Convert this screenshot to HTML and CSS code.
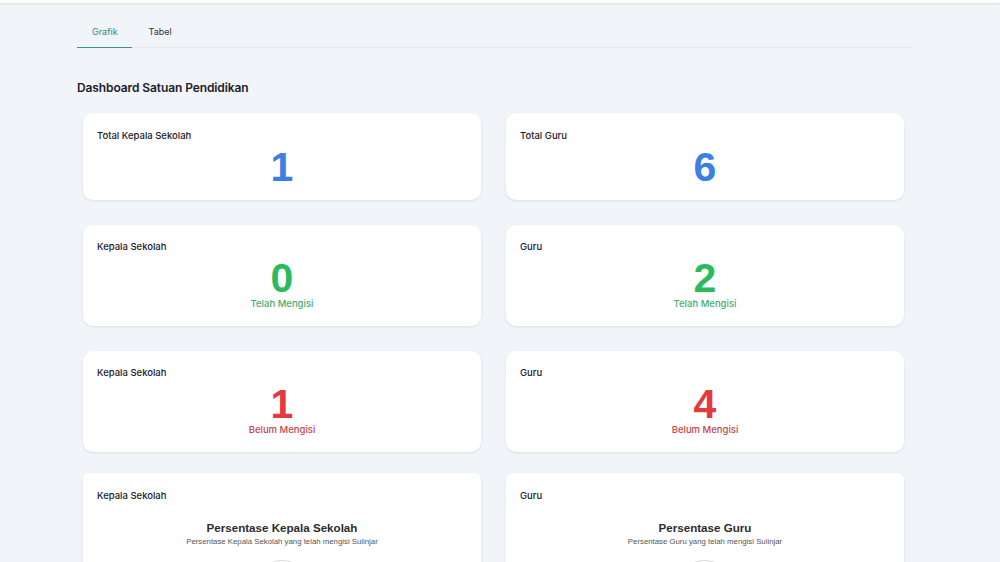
FILE: index.html
```html
<!DOCTYPE html>
<html>
<head>
<meta charset="utf-8">
<link rel="stylesheet" href="styles.css">
</head>
<body>
<div class="topbar"></div>
<main class="page">
  <nav class="tabs">
    <div class="tab active">Grafik</div>
    <div class="tab">Tabel</div>
  </nav>
  <h1 class="heading">Dashboard Satuan Pendidikan</h1>
  <section class="grid">
    <div class="card small">
      <div class="card-title">Total Kepala Sekolah</div>
      <div class="num blue">1</div>
    </div>
    <div class="card small">
      <div class="card-title">Total Guru</div>
      <div class="num blue">6</div>
    </div>
    <div class="card">
      <div class="card-title">Kepala Sekolah</div>
      <div class="num green">0</div>
      <div class="sub green-t">Telah Mengisi</div>
    </div>
    <div class="card">
      <div class="card-title">Guru</div>
      <div class="num green">2</div>
      <div class="sub green-t">Telah Mengisi</div>
    </div>
    <div class="card">
      <div class="card-title">Kepala Sekolah</div>
      <div class="num red">1</div>
      <div class="sub red-t">Belum Mengisi</div>
    </div>
    <div class="card">
      <div class="card-title">Guru</div>
      <div class="num red">4</div>
      <div class="sub red-t">Belum Mengisi</div>
    </div>
    <div class="card chart">
      <div class="card-title">Kepala Sekolah</div>
      <div class="chart-title">Persentase Kepala Sekolah</div>
      <div class="chart-sub">Persentase Kepala Sekolah yang telah mengisi Sulinjar</div>
      <div class="pie"></div>
    </div>
    <div class="card chart">
      <div class="card-title">Guru</div>
      <div class="chart-title">Persentase Guru</div>
      <div class="chart-sub">Persentase Guru yang telah mengisi Sulinjar</div>
      <div class="pie"></div>
    </div>
  </section>
</main>
</body>
</html>
```
FILE: styles.css
```css
html, body {
  margin: 0;
  padding: 0;
  background: #f1f4f8;
  font-family: Inter, "Noto Sans", sans-serif;
  color: #1f2430;
  overflow: hidden;
  height: 562px;
}
.topbar {
  height: 3px;
  background: #ffffff;
  box-shadow: 0 1px 3px rgba(0,0,0,0.08);
}
.page {
  padding-left: 77px;
  width: 835px;
}
.tabs {
  display: flex;
  margin-top: 20px;
  border-bottom: 1px solid #e6e9ee;
}
.tab {
  font-size: 9px;
  color: #333;
  padding: 0 14px 8px 15px;
  height: 16px;
  line-height: 17px;
  margin-bottom: -1px;
}
.tab.active {
  color: #2f8f6b;
  border-bottom: 1px solid #3c9679;
}
.tab + .tab {
  padding-left: 17px;
}
.heading {
  font-size: 12px;
  font-weight: 600;
  margin: 32px 0 0 0;
  line-height: 16px;
  color: #1c202a;
  letter-spacing: -0.1px;
}
.grid {
  display: grid;
  grid-template-columns: 398px 398px;
  column-gap: 25px;
  row-gap: 25px;
  margin: 17px 0 0 6px;
}
.card {
  background: #fff;
  border-radius: 10px;
  box-shadow: 0 1px 3px rgba(0,0,0,0.09);
  height: 101px;
  box-sizing: border-box;
  padding: 16px 14px 0 14px;
  display: flex;
  flex-direction: column;
  align-items: center;
}
.card.small {
  height: 87px;
  padding-top: 17px;
}
.card.chart {
  height: 120px;
  border-radius: 6px;
  padding-top: 17px;
  margin-top: -4px;
}
.card-title {
  align-self: flex-start;
  font-size: 9.5px;
  font-weight: 500;
  line-height: 12px;
  color: #1c202a;
}
.num {
  font-family: "Liberation Sans", Arial, sans-serif;
  font-weight: 700;
  font-size: 41px;
  line-height: 40px;
  margin-top: 5px;
}
.blue { color: #3d7fe2; }
.green { color: #2cbb5c; }
.red { color: #e23a3f; }
.sub {
  font-size: 9.5px;
  font-weight: 500;
  line-height: 12px;
  margin-top: 0;
}
.green-t { color: #45ad6d; }
.red-t { color: #c8444a; }
.chart-title {
  font-family: "Liberation Sans", Arial, sans-serif;
  font-weight: 700;
  font-size: 11.6px;
  color: #2c2c2c;
  margin-top: 19px;
  line-height: 14px;
}
.chart-sub {
  font-family: "Liberation Sans", Arial, sans-serif;
  font-size: 7.8px;
  color: #555;
  line-height: 10px;
  margin-top: 2px;
}
.pie {
  width: 40px;
  height: 40px;
  border: 1px solid #dcdcdc;
  border-radius: 50%;
  margin-top: 13px;
}
```
